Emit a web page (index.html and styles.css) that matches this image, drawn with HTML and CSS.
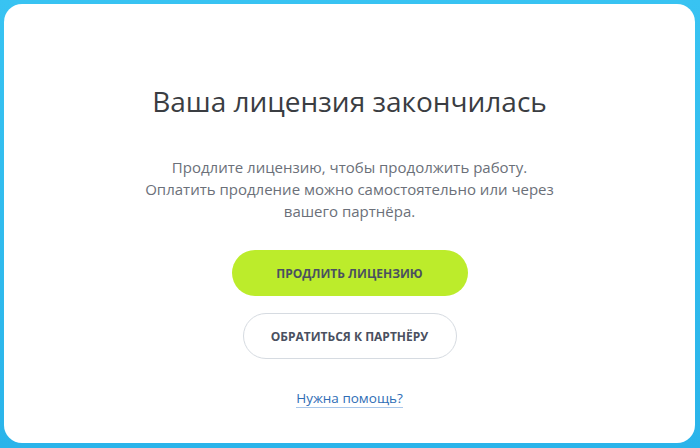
FILE: index.html
```html
<!DOCTYPE html>
<html lang="ru">
<head>
    <meta charset="UTF-8">
    <meta name="viewport" content="width=device-width, initial-scale=1.0">
    <title>Лицензия закончилась</title>
    <link rel="stylesheet" href="styles.css">
</head>
<body>
    <!-- Expired license dialog -->
    <section class="license-card">
        <h1 class="license-title">Ваша лицензия закончилась</h1>
        <p class="license-text">
            Продлите лицензию, чтобы продолжить работу.<br>
            Оплатить продление можно самостоятельно или через<br>
            вашего партнёра.
        </p>
        <div class="license-actions">
            <button class="btn btn-primary">Продлить лицензию</button>
            <button class="btn btn-outline">Обратиться к партнёру</button>
        </div>
        <a class="help-link" href="#">Нужна помощь?</a>
    </section>
</body>
</html>
```

FILE: styles.css
```css
html, body {
    height: 100%;
}

body {
    margin: 0;
    padding: 4px 5px 5px 4px;
    box-sizing: border-box;
    font-family: "Open Sans", sans-serif;
    background: linear-gradient(to bottom, #38c3f2, #2ab4ea);
}

.license-card {
    height: 100%;
    box-sizing: border-box;
    background: #fff;
    border-radius: 18px;
    display: flex;
    flex-direction: column;
    align-items: center;
    text-align: center;
    padding-top: 78px;
}

.license-title {
    margin: 0;
    font-size: 28px;
    font-weight: 400;
    line-height: 38px;
    color: #3a3d42;
}

.license-text {
    margin: 36px 0 0;
    font-size: 15px;
    line-height: 22px;
    color: #6b7079;
}

.license-actions {
    margin-top: 28px;
    display: flex;
    flex-direction: column;
    align-items: center;
    gap: 17px;
}

.btn {
    height: 46px;
    border-radius: 23px;
    font-family: "Open Sans", sans-serif;
    font-size: 12px;
    font-weight: 700;
    text-transform: uppercase;
    color: #4a5060;
    cursor: pointer;
}

.btn-primary {
    width: 236px;
    border: none;
    background: #bcec2b;
}

.btn-outline {
    width: 214px;
    border: 1px solid #d6dbe1;
    background: #fff;
}

.help-link {
    margin-top: 31px;
    font-size: 13.5px;
    color: #2f6db5;
    text-decoration: none;
    border-bottom: 1px solid #a9c7ea;
    line-height: 17px;
}
```
